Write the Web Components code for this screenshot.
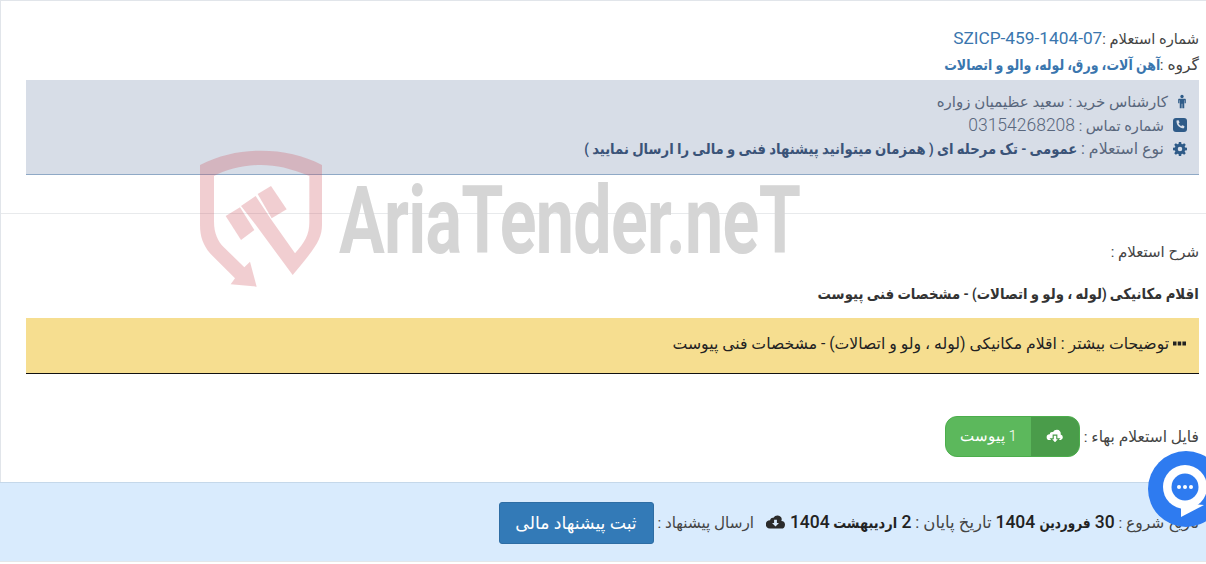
<!DOCTYPE html>
<html lang="fa" dir="rtl">
<head>
<meta charset="utf-8">
<title>AriaTender</title>
<style>
  html, body { margin: 0; background: #fff; }
  body { font-family: Roboto, "DejaVu Sans", sans-serif; color: #333; height: 564px; overflow: hidden; position: relative; }
</style>
</head>
<body>
<tender-page>
  <tender-head code="SZICP-459-1404-07" group="آهن آلات، ورق، لوله، والو و اتصالات"></tender-head>
  <buyer-info></buyer-info>
  <tender-desc></tender-desc>
  <file-row></file-row>
</tender-page>
<offer-bar></offer-bar>
<water-mark></water-mark>
<chat-fab></chat-fab>

<script>
const ICONS = {
  person: '<svg viewBox="0 0 12 16" width="10" height="15"><circle cx="6" cy="2" r="2" fill="currentColor"/><path fill="currentColor" d="M2.6 4.600h6.800c.7 0 1.200.5 1.200 1.200v4.300H9.200V6.600h-.5V16H6.400v-5.200h-.8V16H3.300V6.600h-.5v3.500H1.400V5.800c0-.7.5-1.200 1.200-1.200z"/></svg>',
  phone: '<svg viewBox="0 0 14 14" width="14" height="14"><rect width="14" height="14" rx="3" fill="currentColor"/><path fill="#d7dde7" d="M3.800 2.600l1.500-.3c.2 0 .3.1.4.2l.8 1.800c.1.2 0 .3-.1.4l-.9.8c.6 1.200 1.500 2.100 2.700 2.700l.8-.9c.1-.1.3-.2.4-.1l1.800.8c.2.1.2.2.2.4l-.3 1.500c0 .2-.2.3-.3.3C6.500 10.200 3.500 7.200 3.500 2.900c0-.1.1-.3.3-.3z"/></svg>',
  gear: '<svg viewBox="0 0 16 16" width="14" height="14"><path fill="currentColor" fill-rule="evenodd" d="M6.700 0h2.600l.4 2.200 1.200.5L12.800 1.400l1.800 1.800-1.300 1.900.5 1.200 2.200.4v2.600l-2.200.4-.5 1.200 1.300 1.900-1.800 1.800-1.900-1.300-1.200.5-.4 2.200H6.700l-.4-2.200-1.200-.5-1.900 1.300-1.800-1.800 1.300-1.900-.5-1.200L0 9.300V6.700l2.200-.4.500-1.200L1.400 3.200l1.800-1.800 1.900 1.300 1.200-.5zM8 5.400a2.600 2.600 0 1 0 0 5.200 2.600 2.600 0 0 0 0-5.200z"/></svg>',
  cloudUp: '<svg viewBox="0 0 20 16" width="18" height="15"><path fill="#fff" d="M16.300 5.800A4.200 4.200 0 0 0 12 .5a4.800 4.800 0 0 0-4.200 2.500A2.800 2.800 0 0 0 4.200 5.400 3.300 3.300 0 0 0 3.800 12h12.500a3.200 3.200 0 0 0 0-6.200z"/><path fill="#fff" stroke="#4a9c4a" stroke-width="1.300" d="M8 6.500h4v4h2.600L10 15.400 5.400 10.500H8z"/></svg>',
  cloudDown: '<svg viewBox="0 0 20 15" width="19" height="14"><path fill="currentColor" fill-rule="evenodd" d="M16.300 6.300A4.200 4.200 0 0 0 12 .5a4.800 4.800 0 0 0-4.200 2.500A2.800 2.800 0 0 0 4.200 5.600 3.400 3.400 0 0 0 3.800 14.500h12a3.300 3.300 0 0 0 .5-8.200zM8.500 5h3v3.500h2.200L10 12.400 6.300 8.500h2.200z"/></svg>',
  dots: '<svg viewBox="0 0 13 5" width="13" height="5"><path fill="currentColor" d="M0 .5h3.500v4H0zM4.700 .5h3.500v4H4.700zM9.400 .5H13v4H9.400z"/></svg>'
};

class TenderPage extends HTMLElement {
  constructor() {
    super();
    this.attachShadow({ mode: 'open' }).innerHTML = `
      <style>
        :host { display: block; height: 482px; box-sizing: border-box; border-top: 1px solid #e1e5ea; border-left: 1px solid #e1e5ea; padding-top: 23px; }
      </style>
      <slot></slot>`;
  }
}

class TenderHead extends HTMLElement {
  constructor() {
    super();
    this.attachShadow({ mode: 'open' }).innerHTML = `
      <style>
        :host { display: block; padding: 0 7px 0 0; font-size: 14.700px; color: #444; }
        .row { height: 28px; line-height: 28px; white-space: nowrap; }
        .row + .row { line-height: 26px; }
        .code { font-size: 17.300px; color: #3a76ae; }
        .group { display: inline-block; font-size: 15px; font-weight: 700; color: #3a76ae; transform: scaleX(.84); transform-origin: right center; }
        .lab2 { font-size: 15.500px; }
      </style>
      <div class="row">شماره استعلام :<span class="code">${this.getAttribute('code')}</span></div>
      <div class="row"><span class="lab2">گروه :</span><span class="group">${this.getAttribute('group')}</span></div>`;
  }
}

class BuyerInfo extends HTMLElement {
  constructor() {
    super();
    this.attachShadow({ mode: 'open' }).innerHTML = `
      <style>
        :host { display: block; margin: 0 7px 38px 25px; height: 95px; box-sizing: border-box; background: #d7dde7; border-bottom: 1px solid #8fa9c6; padding: 10px 12px 0 0; font-size: 15px; color: #59677d; }
        .row { display: flex; align-items: center; gap: 9px; height: 23.500px; white-space: nowrap; }
        .ico { display: flex; color: #2f5b88; }
        .num { font-size: 17.500px; font-weight: 300; }
        .tel { font-size: 14.600px; }
        .kind { font-size: 15.800px; }
        b { display: inline-block; font-size: 15px; color: #3a5378; font-weight: 700; transform: scaleX(.88); transform-origin: right center; }
      </style>
      <div class="row"><span class="ico">${ICONS.person}</span><span>کارشناس خرید : سعید عظیمیان زواره</span></div>
      <div class="row"><span class="ico">${ICONS.phone}</span><span class="tel">شماره تماس : <span class="num">03154268208</span></span></div>
      <div class="row"><span class="ico">${ICONS.gear}</span><span class="kind">نوع استعلام : <b>عمومی - تک مرحله ای ( همزمان میتوانید پیشنهاد فنی و مالی را ارسال نمایید )</b></span></div>`;
  }
}

class TenderDesc extends HTMLElement {
  constructor() {
    super();
    this.attachShadow({ mode: 'open' }).innerHTML = `
      <style>
        :host { display: block; border-top: 1px solid #e8eaec; padding-top: 27px; font-size: 15px; color: #444; }
        .label { padding-right: 7px; height: 22px; line-height: 22px; }
        .title { padding-right: 7px; margin-top: 20px; height: 22px; line-height: 22px; color: #333; }
        .title span { display: inline-block; font-weight: 700; transform: scaleX(.885); transform-origin: right center; white-space: nowrap; }
        .note { margin: 13px 7px 0 25px; height: 56px; box-sizing: border-box; background: #f6de90; border-bottom: 1px solid #111; padding: 0 13px; line-height: 51px; color: #222; font-size: 15.700px; white-space: nowrap; }
        .dots { display: inline-flex; vertical-align: 3px; }
      </style>
      <div class="label">شرح استعلام :</div>
      <div class="title"><span>اقلام مکانیکی (لوله ، ولو و اتصالات) - مشخصات فنی پیوست</span></div>
      <div class="note"><span class="dots">${ICONS.dots}</span> توضیحات بیشتر : اقلام مکانیکی (لوله ، ولو و اتصالات) - مشخصات فنی پیوست</div>`;
  }
}

class FileRow extends HTMLElement {
  constructor() {
    super();
    this.attachShadow({ mode: 'open' }).innerHTML = `
      <style>
        :host { display: flex; align-items: center; gap: 4px; margin-top: 42px; padding-right: 7px; font-size: 15.500px; color: #444; }
        .btn { display: flex; height: 41px; box-sizing: border-box; border: 1px solid #4cae4c; border-radius: 12px; overflow: hidden; color: #fff; background: #5cb85c; }
        .ic { width: 48px; background: #4a9c4a; display: flex; align-items: center; justify-content: center; }
        .tx { width: 85px; text-align: center; line-height: 38px; font-size: 15px; font-weight: 300; }
      </style>
      <span>فایل استعلام بهاء :</span>
      <span class="btn"><span class="ic">${ICONS.cloudUp}</span><span class="tx">1 پیوست</span></span>`;
  }
}

class OfferBar extends HTMLElement {
  constructor() {
    super();
    this.attachShadow({ mode: 'open' }).innerHTML = `
      <style>
        :host { display: flex; align-items: center; height: 80px; box-sizing: border-box; background: #d9ebfd; border-top: 1px solid #c5d8ea; border-bottom: 1px solid #e4e7ea; padding-right: 7px; font-size: 15.500px; color: #444; white-space: nowrap; }
        b { font-size: 15px; font-weight: 700; color: #222; }
        b i { font-style: normal; font-size: 17.500px; font-weight: 500; }
        b u { text-decoration: none; display: inline-block; }
        .d1 { margin: 0 -6px; transform: scaleX(.8); }
        .d2 { margin: 0 -5px; transform: scaleX(.86); }
        .end { font-size: 16.500px; }
        .send { font-size: 15.200px; }
        .ic { color: #2b2b2b; margin: 0 5px 0 8px; display: inline-flex; vertical-align: -1px; }
        button { font: inherit; font-size: 17.300px; height: 42px; width: 155px; margin: 1px 4px 0 0; background: #337ab7; color: #fff; border: 1px solid #2e6da4; border-radius: 3px; padding: 0; }
      </style>
      <span>تاریخ شروع : <b><i>30</i> <u class="d1">فروردین</u> <i>1404</i></b> <span class="end">تاریخ پایان :</span> <b><i>2</i> <u class="d2">اردیبهشت</u> <i>1404</i></b><span class="ic">${ICONS.cloudDown}</span> <span class="send">ارسال پیشنهاد :</span></span>
      <button>ثبت پیشنهاد مالی</button>`;
  }
}

class WaterMark extends HTMLElement {
  constructor() {
    super();
    this.attachShadow({ mode: 'open' }).innerHTML = `
      <style>
        :host { position: absolute; left: 190px; top: 150px; width: 620px; height: 145px; pointer-events: none; }
        svg { position: absolute; left: 0; top: 0; }
        .word { position: absolute; left: 149px; top: 24px; direction: ltr; font-family: Roboto, sans-serif; font-size: 94px; line-height: 94px; color: #d5d5d5; white-space: nowrap; font-weight: 700; letter-spacing: -1px; transform-origin: left top; transform: scaleX(.725); }
      </style>
      <svg width="140" height="145" viewBox="0 0 420 435">
        <g fill="#cd4b55" fill-opacity=".27">
          <path d="M30 45C90 15 150 2 213 2C280 2 340 15 396 45L396 225C396 270 372 298 308 375L190 215L153 168L197 138L243 208L315 310C345 275 358 255 358 215L358 78C300 55 260 45 213 45C160 45 110 58 72 78L72 215C72 250 85 275 100 290L163 352L180 335L200 410L122 403L135 385L60 310C40 285 30 260 30 225Z"/>
          <path d="M107 198L150 172L193 240L153 270Z"/>
          <path d="M203 132L243 108L290 178L245 205Z"/>
        </g>
      </svg>
      <span class="word">AriaTender.neT</span>`;
  }
}

class ChatFab extends HTMLElement {
  constructor() {
    super();
    this.attachShadow({ mode: 'open' }).innerHTML = `
      <style>
        :host { position: absolute; left: 1148px; top: 451px; width: 76px; height: 76px; border-radius: 50%; background: #2e7bf0; display: block; }
        svg { position: absolute; left: 0; top: 0; }
      </style>
      <svg width="76" height="76" viewBox="0 0 76 76">
        <circle cx="37" cy="36" r="22" fill="#fff"/>
        <path fill="#fff" d="M33 52V66L56 54Z"/>
        <circle cx="37" cy="36" r="13.500" fill="#2e7bf0"/>
        <circle cx="31" cy="36" r="2" fill="#fff"/><circle cx="37" cy="36" r="2" fill="#fff"/><circle cx="43" cy="36" r="2" fill="#fff"/>
      </svg>`;
  }
}

customElements.define('tender-page', TenderPage);
customElements.define('tender-head', TenderHead);
customElements.define('buyer-info', BuyerInfo);
customElements.define('tender-desc', TenderDesc);
customElements.define('file-row', FileRow);
customElements.define('offer-bar', OfferBar);
customElements.define('water-mark', WaterMark);
customElements.define('chat-fab', ChatFab);
</script>
</body>
</html>
